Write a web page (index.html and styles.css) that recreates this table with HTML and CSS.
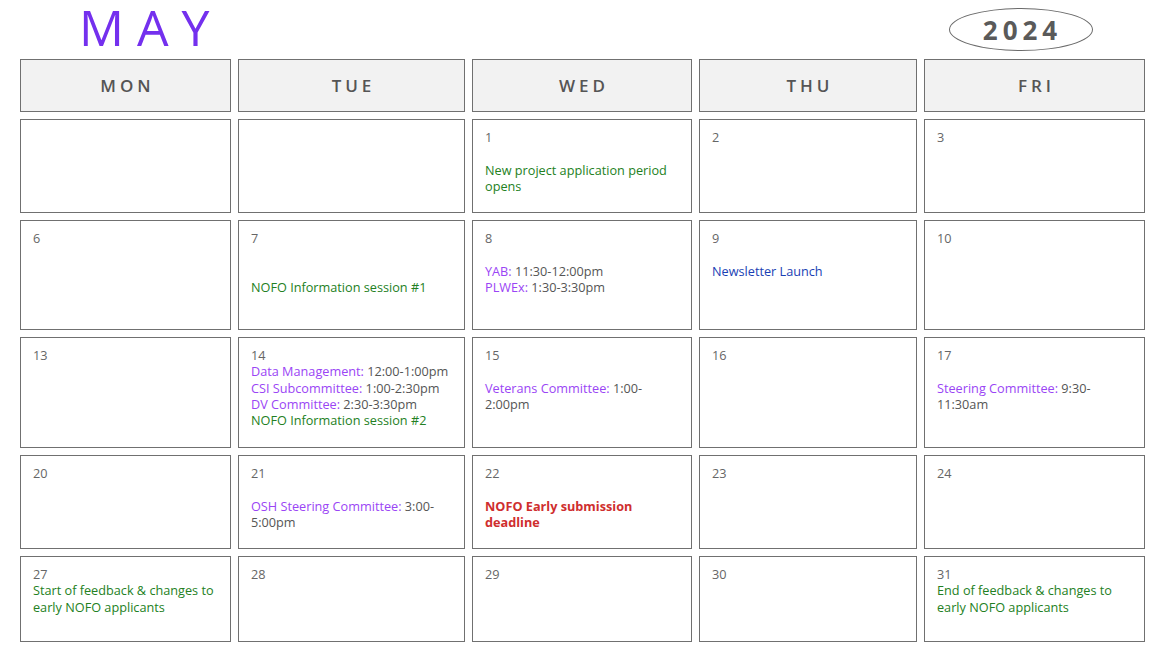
FILE: index.html
```html
<!DOCTYPE html>
<html>
<head>
<meta charset="utf-8">
<link rel="stylesheet" href="styles.css">
</head>
<body>
<div class="page">
  <div class="top">
    <h1 class="month">MAY</h1>
    <div class="year">2024</div>
  </div>
  <div class="cal">
    <div class="head">MON</div>
    <div class="head">TUE</div>
    <div class="head">WED</div>
    <div class="head">THU</div>
    <div class="head">FRI</div>

    <div class="cell"></div>
    <div class="cell"></div>
    <div class="cell"><div class="d">1</div><div class="gap1"></div><div class="ev green">New project application period opens</div></div>
    <div class="cell"><div class="d">2</div></div>
    <div class="cell"><div class="d">3</div></div>

    <div class="cell"><div class="d">6</div></div>
    <div class="cell"><div class="d">7</div><div class="gap2"></div><div class="ev green">NOFO Information session #1</div></div>
    <div class="cell"><div class="d">8</div><div class="gap1"></div><div class="ev"><span class="purple">YAB:</span> 11:30-12:00pm</div><div class="ev"><span class="purple">PLWEx:</span> 1:30-3:30pm</div></div>
    <div class="cell"><div class="d">9</div><div class="gap1"></div><div class="ev blue">Newsletter Launch</div></div>
    <div class="cell"><div class="d">10</div></div>

    <div class="cell"><div class="d">13</div></div>
    <div class="cell"><div class="d">14</div><div class="ev"><span class="purple">Data Management:</span> 12:00-1:00pm</div><div class="ev"><span class="purple">CSI Subcommittee:</span> 1:00-2:30pm</div><div class="ev"><span class="purple">DV Committee:</span> 2:30-3:30pm</div><div class="ev green">NOFO Information session #2</div></div>
    <div class="cell"><div class="d">15</div><div class="gap1"></div><div class="ev"><span class="purple">Veterans Committee:</span> 1:00-2:00pm</div></div>
    <div class="cell"><div class="d">16</div></div>
    <div class="cell"><div class="d">17</div><div class="gap1"></div><div class="ev"><span class="purple">Steering Committee:</span> 9:30-11:30am</div></div>

    <div class="cell"><div class="d">20</div></div>
    <div class="cell"><div class="d">21</div><div class="gap1"></div><div class="ev"><span class="purple">OSH Steering Committee:</span> 3:00-5:00pm</div></div>
    <div class="cell"><div class="d">22</div><div class="gap1"></div><div class="ev red">NOFO Early submission deadline</div></div>
    <div class="cell"><div class="d">23</div></div>
    <div class="cell"><div class="d">24</div></div>

    <div class="cell"><div class="d">27</div><div class="ev green">Start of feedback &amp; changes to early NOFO applicants</div></div>
    <div class="cell"><div class="d">28</div></div>
    <div class="cell"><div class="d">29</div></div>
    <div class="cell"><div class="d">30</div></div>
    <div class="cell"><div class="d">31</div><div class="ev green">End of feedback &amp; changes to early NOFO applicants</div></div>
  </div>
</div>
</body>
</html>
```

FILE: styles.css
```css
html, body {
  margin: 0;
  padding: 0;
  background: #ffffff;
}
.page {
  padding-left: 20px;
  font-family: "Open Sans", "Liberation Sans", sans-serif;
}
.top {
  height: 59px;
  position: relative;
  width: 1125px;
}
.month {
  margin: 0;
  position: absolute;
  left: 59px;
  top: 0;
  font-size: 50px;
  font-weight: 400;
  letter-spacing: 13px;
  color: #7430ee;
  line-height: 54px;
}
.year {
  position: absolute;
  left: 929px;
  top: 8px;
  width: 139px;
  height: 41px;
  border: 1px solid #6a6a6a;
  border-radius: 50%;
  display: flex;
  align-items: center;
  justify-content: center;
  font-size: 26px;
  font-weight: 700;
  letter-spacing: 5px;
  color: #5a5a5a;
  padding-left: 3px;
}
.cal {
  display: grid;
  grid-template-columns: 211px 227px 220px 218px 221px;
  grid-template-rows: 53px 94px 110px 111px 94px 86px;
  gap: 7px;
}
.head {
  box-sizing: border-box;
  border: 1px solid #707070;
  background: #f2f2f2;
  display: flex;
  align-items: center;
  justify-content: center;
  font-size: 17px;
  font-weight: 600;
  letter-spacing: 4px;
  color: #555555;
  padding-left: 4px;
  padding-bottom: 1px;
}
.cell {
  box-sizing: border-box;
  border: 1px solid #707070;
  padding: 9px 12px 0 12px;
  font-size: 12.7px;
  line-height: 16.3px;
  color: #595959;
}
.d {
  color: #666666;
}
.gap1 { height: 16.3px; }
.gap2 { height: 32.6px; }
.ev { color: #555555; }
.green { color: #237f23; }
.purple { color: #9a45f5; }
.blue { color: #1a3fb4; }
.red { color: #cf2e2e; font-weight: 700; }
```
